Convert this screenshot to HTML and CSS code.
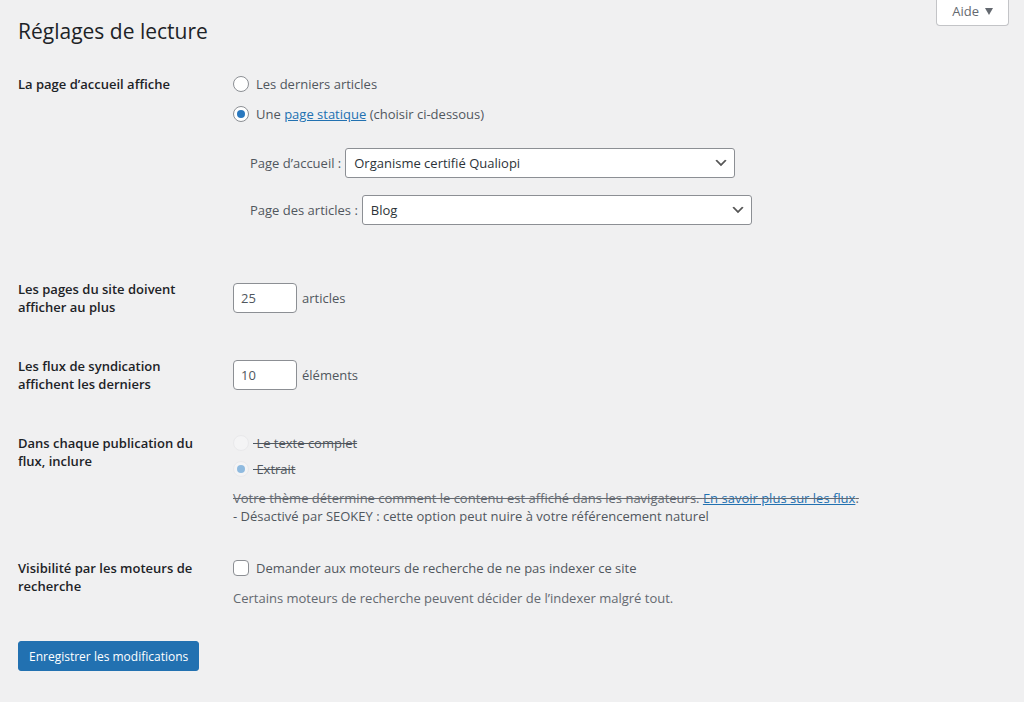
FILE: index.html
```html
<!DOCTYPE html>
<html lang="fr">
<head>
  <meta charset="UTF-8">
  <meta name="viewport" content="width=device-width, initial-scale=1.0">
  <title>Réglages de lecture</title>
  <link rel="stylesheet" href="styles.css">
</head>
<body>
  <header class="page-header">
    <h1>Réglages de lecture</h1>
    <button type="button" class="help-tab">Aide
      <svg width="8" height="7" viewBox="0 0 8 7" aria-hidden="true"><path d="M0 0h8L4 7z" fill="currentColor"/></svg>
    </button>
  </header>

  <form class="settings">
    <div class="row" role="group" aria-labelledby="front-title">
      <div class="title" id="front-title">La page d’accueil affiche</div>
      <div class="field">
        <div class="choice">
          <input type="radio" name="front" id="front-posts">
          <label for="front-posts">Les derniers articles</label>
        </div>
        <div class="choice">
          <input type="radio" name="front" id="front-page" checked>
          <label for="front-page">Une <a href="#">page statique</a> (choisir ci-dessous)</label>
        </div>
        <div class="pages">
          <div class="page-select">
            <label for="page-home">Page d’accueil :</label>
            <select id="page-home">
              <option>Organisme certifié Qualiopi</option>
            </select>
          </div>
          <div class="page-select">
            <label for="page-posts">Page des articles :</label>
            <select id="page-posts">
              <option>Blog</option>
            </select>
          </div>
        </div>
      </div>
    </div>

    <div class="row">
      <label class="title" for="posts-per-page">Les pages du site doivent afficher au plus</label>
      <div class="field number">
        <input type="number" id="posts-per-page" value="25" min="1">
        <span>articles</span>
      </div>
    </div>

    <div class="row">
      <label class="title" for="posts-per-rss">Les flux de syndication affichent les derniers</label>
      <div class="field number">
        <input type="number" id="posts-per-rss" value="10" min="1">
        <span>éléments</span>
      </div>
    </div>

    <div class="row" role="group" aria-labelledby="feed-title">
      <div class="title" id="feed-title">Dans chaque publication du flux, inclure</div>
      <div class="field">
        <div class="choice compact">
          <input type="radio" name="feed" id="feed-full" disabled>
          <label class="struck" for="feed-full">&nbsp;Le texte complet</label>
        </div>
        <div class="choice compact">
          <input type="radio" name="feed" id="feed-excerpt" checked disabled>
          <label class="struck" for="feed-excerpt">&nbsp;Extrait</label>
        </div>
        <p class="description struck">Votre thème détermine comment le contenu est affiché dans les navigateurs. <a href="#">En savoir plus sur les flux</a>.</p>
        <p class="notice">- Désactivé par SEOKEY : cette option peut nuire à votre référencement naturel</p>
      </div>
    </div>

    <div class="row" role="group" aria-labelledby="visibility-title">
      <div class="title" id="visibility-title">Visibilité par les moteurs de recherche</div>
      <div class="field">
        <div class="choice">
          <input type="checkbox" id="noindex">
          <label for="noindex">Demander aux moteurs de recherche de ne pas indexer ce site</label>
        </div>
        <p class="description">Certains moteurs de recherche peuvent décider de l’indexer malgré tout.</p>
      </div>
    </div>

    <button type="submit" class="submit">Enregistrer les modifications</button>
  </form>
</body>
</html>
```
FILE: styles.css
```css
* {
  box-sizing: border-box;
}
body {
  margin: 0;
  padding: 0 15px 30px 18px;
  background-color: #f0f0f1;
  color: #50575e;
  font-family: "Segoe UI", "Open Sans", sans-serif;
  font-size: 13px;
  line-height: 18px;
}
h1, p {
  margin: 0;
}
a {
  color: #2271b1;
}
input, select, button {
  font-family: inherit;
  font-size: 13px;
  margin: 0;
}

/* header */
.page-header {
  display: flex;
  justify-content: space-between;
  align-items: flex-start;
  height: 75px;
}
h1 {
  padding-top: 17px;
  color: #1d2327;
  font-size: 21px;
  font-weight: 400;
  line-height: 28px;
}
.help-tab {
  display: flex;
  align-items: center;
  gap: 6px;
  padding: 2px 15px 5px;
  border: 1px solid #c3c4c7;
  border-top: none;
  border-radius: 0 0 4px 4px;
  background-color: #fff;
  color: #646970;
  line-height: 18px;
}

/* settings */
.settings {
  display: flex;
  flex-direction: column;
  align-items: flex-start;
  gap: 34px;
}
.row {
  display: flex;
  width: 100%;
}
.title {
  flex: none;
  width: 215px;
  padding-right: 32px;
  color: #1d2327;
  font-weight: 600;
}
.field {
  flex: 1;
}
.choice {
  display: flex;
  align-items: center;
  gap: 7px;
  margin-bottom: 12px;
}
.choice.compact {
  gap: 4px;
  margin-bottom: 8px;
}
.pages {
  display: flex;
  flex-direction: column;
  gap: 17px;
  padding: 13px 0 21px 17px;
}
.page-select {
  display: flex;
  align-items: center;
  gap: 4px;
}
select {
  appearance: none;
  width: 390px;
  height: 30px;
  padding: 0 24px 0 8px;
  border: 1px solid #8c8f94;
  border-radius: 3px;
  background: #fff url("data:image/svg+xml,%3Csvg xmlns='http://www.w3.org/2000/svg' viewBox='0 0 20 20'%3E%3Cpath d='M5 6l5 5 5-5 2 1-7 7-7-7 2-1z' fill='%23555'/%3E%3C/svg%3E") no-repeat right 5px center / 16px 16px;
  color: #2c3338;
}
input[type="number"] {
  appearance: textfield;
  width: 64px;
  height: 30px;
  padding: 0 7px;
  border: 1px solid #8c8f94;
  border-radius: 4px;
  background-color: #fff;
  color: #50575e;
}
input::-webkit-inner-spin-button {
  appearance: none;
}
.number {
  display: flex;
  align-items: center;
  gap: 5px;
  padding: 3px 0 10px;
}
input[type="radio"],
input[type="checkbox"] {
  appearance: none;
  display: flex;
  flex: none;
  align-items: center;
  justify-content: center;
  width: 16px;
  height: 16px;
  border: 1px solid #8c8f94;
  border-radius: 50%;
  background-color: #fff;
}
input[type="checkbox"] {
  border-radius: 4px;
}
input[type="radio"]:checked::before {
  content: "";
  width: 8px;
  height: 8px;
  border-radius: 50%;
  background-color: #2978bf;
}
input[type="radio"]:disabled {
  border-color: #e9e9eb;
  background-color: #f4f4f5;
}
input[type="radio"]:disabled::before {
  background-color: #8fbadf;
}
.struck {
  text-decoration: line-through;
}
.description {
  color: #646970;
}
.choice.compact + .description {
  padding-top: 3px;
}
.submit {
  height: 30px;
  padding: 0 10px;
  border: 1px solid #2271b1;
  border-radius: 3px;
  background-color: #2271b1;
  color: #fff;
  font-size: 12px;
}
```
